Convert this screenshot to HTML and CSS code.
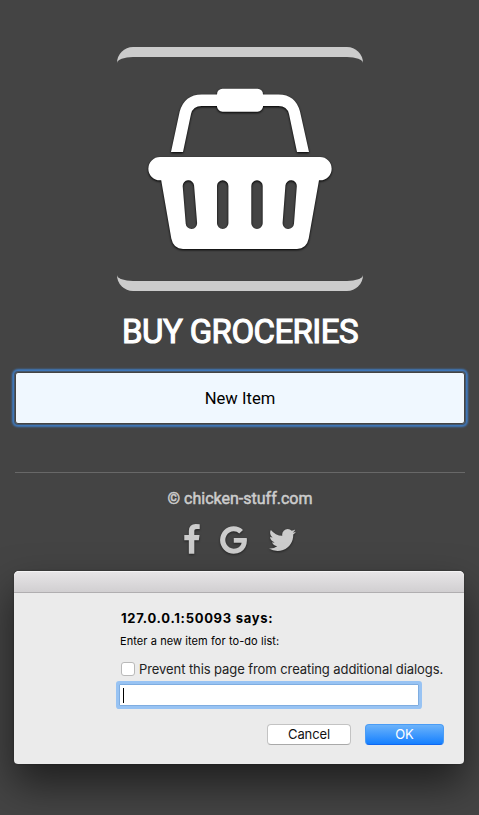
FILE: index.html
```html
<!DOCTYPE html>
<html lang="en">
<head>
<meta charset="utf-8">
<title>Buy Groceries</title>
<link rel="stylesheet" href="styles.css">
</head>
<body>
<main class="page">
  <div class="frame">
    <svg class="basket" viewBox="148 88 184 162" aria-hidden="true">
      <defs>
        <mask id="slots" maskUnits="userSpaceOnUse" x="140" y="150" width="200" height="110">
          <rect x="140" y="150" width="200" height="110" fill="#fff"/>
          <path d="M188.4 186l3 37.200M222.700 186v37.200M257 186v37.200M291.100 186l-2.800 37.200" stroke="#000" stroke-width="11.400" stroke-linecap="round"/>
        </mask>
      </defs>
      <path d="M171 152L179.700 111.500Q184.500 94.400 201.700 94.400H278.500Q295.500 94.400 300 111.500L309 152H297L289 114Q287 106 278.500 106H201.700Q193 106 191 114L183 152Z"/>
      <rect x="217" y="88.700" width="46" height="23" rx="5.500"/>
      <path mask="url(#slots)" d="M160 157H320A11.600 11.600 0 0 1 320 180.300H319L308.700 238.500Q306.500 249 297 249H183Q173.500 249 171.300 238.500L161.200 180.300H160A11.600 11.600 0 0 1 160 157Z"/>
    </svg>
  </div>
  <h1 class="title">BUY GROCERIES</h1>
  <button class="new-item">New Item</button>
  <footer class="footer">
    <p class="copyright">© chicken-stuff.com</p>
    <nav class="social">
      <svg class="facebook" viewBox="479 0 864 1792"><path d="M1343 12v264h-157q-86 0-116 36t-30 108v189h293l-39 296h-254v759h-306v-759h-255v-296h255v-218q0-186 104-288.500t277-102.500q147 0 228 12z"/></svg>
      <svg class="google" viewBox="128 0 1505 1792"><path d="M896 786h725q12 67 12 128 0 217-91 387.500t-259.500 266.500-386.500 96q-157 0-299-60.500t-245-163.500-163.500-245-60.500-299 60.500-299 163.500-245 245-163.500 299-60.500q300 0 515 201l-209 201q-123-119-306-119-129 0-238.500 65t-173.500 176.500-64 243.500 64 243.500 173.500 176.500 238.500 65q87 0 160-24t120-60 82-82 51.500-87 22.500-78h-436v-264z"/></svg>
      <svg class="twitter" viewBox="108 0 1576 1792"><path d="M1684 408q-67 98-162 167 1 14 1 42 0 130-38 259.500t-115.500 248.500-184.500 210.500-258 146-323 54.500q-271 0-496-145 35 4 78 4 225 0 401-138-105-2-188-64.500t-114-159.500q33 5 61 5 43 0 85-11-112-23-185.500-111.500t-73.500-205.500v-4q68 38 146 41-66-44-105-115t-39-154q0-88 44-163 121 149 294.500 238.500t371.500 99.500q-8-38-8-74 0-134 94.500-228.500t228.500-94.500q140 0 236 102 109-21 205-78-37 115-142 178 93-10 186-50z"/></svg>
    </nav>
  </footer>
</main>
<section class="dialog" role="dialog">
  <div class="titlebar"></div>
  <div class="content">
    <strong class="origin">127.0.0.1:50093 says:</strong>
    <p class="message">Enter a new item for to-do list:</p>
    <div class="prevent"><span class="checkbox"></span><span class="prevent-text">Prevent this page from creating additional dialogs.</span></div>
    <div class="field"><span class="caret"></span></div>
    <div class="actions">
      <button class="btn cancel">Cancel</button>
      <button class="btn ok">OK</button>
    </div>
  </div>
</section>
</body>
</html>
```
FILE: styles.css
```css
* { box-sizing: border-box; }
html, body { height: 100%; }
body {
  margin: 0;
  background: #444;
  font-family: Roboto, "Liberation Sans", sans-serif;
  overflow: hidden;
}
h1, p { margin: 0; }
button { font: inherit; border: 0; padding: 0; }

.page { padding: 47px 14px 0 15px; }
.frame {
  width: 246px;
  height: 244px;
  margin: 0 auto;
  border: solid #ccc;
  border-width: 10px 0;
  border-radius: 16px;
  padding-top: 31px;
}
.basket {
  display: block;
  width: 184px;
  height: 162px;
  margin: 0 auto;
  overflow: visible;
  fill: #fff;
  filter: drop-shadow(0 1px 1px #000);
}
.title {
  margin-top: 20px;
  height: 40px;
  line-height: 41px;
  text-align: center;
  font-size: 33px;
  font-weight: 400;
  -webkit-text-stroke: 1.1px #fff;
  letter-spacing: -0.58px;
  white-space: nowrap;
  color: #fff;
}
.new-item {
  display: block;
  width: 450px;
  height: 52px;
  margin-top: 21px;
  border: 1px solid #444;
  border-radius: 3px;
  background: #f0f8ff;
  color: #000;
  font-size: 16.600px;
  box-shadow: 0 0 0 1px #44576c, 0 0 2px 3px #3f7abf;
}
.footer {
  margin-top: 48px;
  border-top: 1px solid #686868;
  color: #ccc;
}
.copyright {
  margin-top: 16px;
  line-height: 20px;
  text-align: center;
  font-size: 16px;
  font-weight: 400;
  -webkit-text-stroke: 0.5px #ccc;
}
.social {
  display: flex;
  justify-content: center;
  margin-top: 15px;
}
.social svg {
  height: 32px;
  fill: #ccc;
  overflow: visible;
  filter: drop-shadow(0 1px 1px #222);
}
.facebook { width: 16px; margin-right: 20.500px; }
.google { width: 27px; margin-right: 22px; }
.twitter { width: 27px; }

.dialog {
  position: absolute;
  left: 14px;
  top: 571px;
  width: 450px;
  height: 193px;
  border-radius: 5px 5px 4px 4px;
  background: #ebebeb;
  color: #000;
  font-family: Inter, "Liberation Sans", sans-serif;
  box-shadow: 0 20px 40px rgba(0, 0, 0, 0.55), 0 0 2px rgba(0, 0, 0, 0.35);
}
.titlebar {
  height: 22px;
  border-radius: 5px 5px 0 0;
  border-bottom: 1px solid #b0aeb0;
  background: linear-gradient(#e8e6e8, #d1cfd1);
  box-shadow: inset 0 1px #f4f3f4;
}
.content { padding: 18px 20px 0 106px; }
.origin {
  display: block;
  padding-left: 1px;
  line-height: 15px;
  font-size: 13px;
  letter-spacing: 0.71px;
  white-space: nowrap;
}
.message {
  margin-top: 8px;
  line-height: 14px;
  font-size: 11px;
  letter-spacing: 0.08px;
  white-space: nowrap;
}
.prevent {
  display: flex;
  align-items: center;
  height: 18px;
  margin-top: 12px;
  font-size: 13px;
  letter-spacing: -0.08px;
  white-space: nowrap;
  color: #222;
}
.checkbox {
  flex: none;
  width: 14px;
  height: 14px;
  margin: 0 4px 0 1px;
  border: 1px solid #b9b9b9;
  border-radius: 3px;
  background: #fff;
}
.field {
  width: 300px;
  height: 22px;
  margin: 6px 0 0 -1px;
  padding: 3px;
  border: 1px solid #7fade0;
  background: #fff;
  box-shadow: 0 0 0 3px #98c3f3;
  border-radius: 1px;
}
.caret { display: block; width: 1px; height: 15px; background: #000; }
.actions {
  display: flex;
  justify-content: flex-end;
  gap: 14px;
  margin-top: 18px;
}
.btn {
  height: 21px;
  border-radius: 4px;
  font-size: 13px;
  line-height: 19px;
}
.cancel {
  width: 84px;
  border: 1px solid #c3c3c3;
  border-bottom-color: #a9a9a9;
  background: #fff;
  color: #111;
  letter-spacing: -0.1px;
}
.ok {
  width: 79px;
  border: 1px solid #4a9cf5;
  border-bottom-color: #0f67f0;
  background: linear-gradient(#6cb3fa, #1580ff);
  color: #fff;
}
```
